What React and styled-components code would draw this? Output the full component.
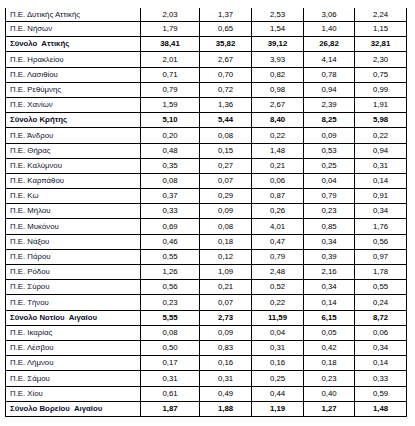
import React from "react";
import styled, { createGlobalStyle } from "styled-components";

const Global = createGlobalStyle`
  html, body { margin: 0; padding: 0; background: #ffffff; }
  body { font-family: "Liberation Sans", Arial, sans-serif; }
`;

const Page = styled.div`
  padding: 8px 0 0 5px;
  width: 415px;
  height: 426px;
  box-sizing: border-box;
  background: #ffffff;
`;

const Table = styled.div`
  width: 402px;
  border-left: 1px solid #000;
  box-sizing: border-box;
  display: flex;
  flex-direction: column;
`;

const Row = styled.div`
  display: grid;
  grid-template-columns: 135px 59px 52px 52px 51px 52px;
  height: ${(p) => (p.$first ? "14px" : "15.2px")};
  border-bottom: 1px solid #000;
  box-sizing: border-box;
  font-size: 7.8px;
  font-weight: ${(p) => (p.$total ? 700 : 400)};
  line-height: 1;
`;

const Cell = styled.div`
  border-right: 1px solid #000;
  box-sizing: border-box;
  display: flex;
  align-items: center;
  justify-content: ${(p) => (p.$label ? "flex-start" : "center")};
  padding-left: ${(p) => (p.$label ? "4px" : "0")};
  color: ${(p) => (p.$label ? "#0d1030" : "#000")};
  white-space: pre;
  overflow: hidden;
`;

const rows = [
  ["Π.Ε. Δυτικής Αττικής", "2,03", "1,37", "2,53", "3,06", "2,24"],
  ["Π.Ε. Νήσων", "1,79", "0,65", "1,54", "1,40", "1,15"],
  ["Σύνολο  Αττικής", "38,41", "35,82", "39,12", "26,82", "32,81", true],
  ["Π.Ε. Ηρακλείου", "2,01", "2,67", "3,93", "4,14", "2,30"],
  ["Π.Ε. Λασιθίου", "0,71", "0,70", "0,82", "0,78", "0,75"],
  ["Π.Ε. Ρεθύμνης", "0,79", "0,72", "0,98", "0,94", "0,99"],
  ["Π.Ε. Χανίων", "1,59", "1,36", "2,67", "2,39", "1,91"],
  ["Σύνολο Κρήτης", "5,10", "5,44", "8,40", "8,25", "5,98", true],
  ["Π.Ε. Άνδρου", "0,20", "0,08", "0,22", "0,09", "0,22"],
  ["Π.Ε. Θήρας", "0,48", "0,15", "1,48", "0,53", "0,94"],
  ["Π.Ε. Καλύμνου", "0,35", "0,27", "0,21", "0,25", "0,31"],
  ["Π.Ε. Καρπάθου", "0,08", "0,07", "0,06", "0,04", "0,14"],
  ["Π.Ε. Κω", "0,37", "0,29", "0,87", "0,79", "0,91"],
  ["Π.Ε. Μήλου", "0,33", "0,09", "0,26", "0,23", "0,34"],
  ["Π.Ε. Μυκόνου", "0,69", "0,08", "4,01", "0,85", "1,76"],
  ["Π.Ε. Νάξου", "0,46", "0,18", "0,47", "0,34", "0,56"],
  ["Π.Ε. Πάρου", "0,55", "0,12", "0,79", "0,39", "0,97"],
  ["Π.Ε. Ρόδου", "1,26", "1,09", "2,48", "2,16", "1,78"],
  ["Π.Ε. Σύρου", "0,56", "0,21", "0,52", "0,34", "0,55"],
  ["Π.Ε. Τήνου", "0,23", "0,07", "0,22", "0,14", "0,24"],
  ["Σύνολο Νοτίου  Αιγαίου", "5,55", "2,73", "11,59", "6,15", "8,72", true],
  ["Π.Ε. Ικαρίας", "0,08", "0,09", "0,04", "0,05", "0,06"],
  ["Π.Ε. Λέσβου", "0,50", "0,83", "0,31", "0,42", "0,34"],
  ["Π.Ε. Λήμνου", "0,17", "0,16", "0,16", "0,18", "0,14"],
  ["Π.Ε. Σάμου", "0,31", "0,31", "0,25", "0,23", "0,33"],
  ["Π.Ε. Χίου", "0,61", "0,49", "0,44", "0,40", "0,59"],
  ["Σύνολο Βορείου  Αιγαίου", "1,87", "1,88", "1,19", "1,27", "1,48", true],
];

export default function App() {
  return (
    <Page>
      <Global />
      <Table>
        {rows.map((r, i) => (
          <Row key={i} $first={i === 0} $total={!!r[6]}>
            <Cell $label>{r[0]}</Cell>
            {r.slice(1, 6).map((v, j) => (
              <Cell key={j}>{v}</Cell>
            ))}
          </Row>
        ))}
      </Table>
    </Page>
  );
}
